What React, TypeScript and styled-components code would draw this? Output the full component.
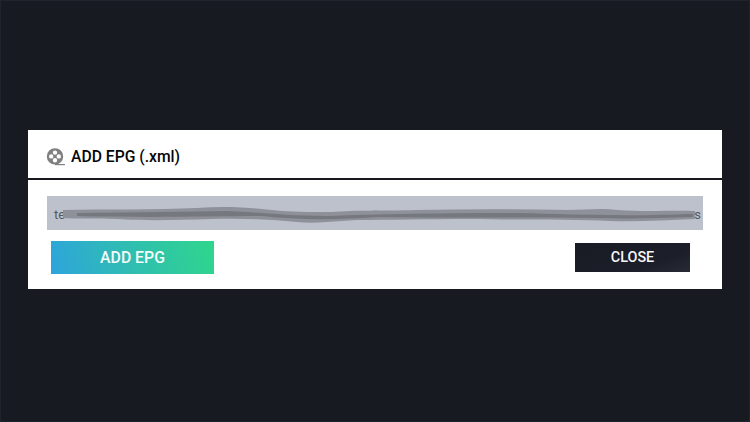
import React from "react";
import styled, { createGlobalStyle } from "styled-components";

const GlobalStyle = createGlobalStyle`
  html, body {
    margin: 0;
    padding: 0;
    height: 100%;
    background: #171a21;
  }
  #root {
    height: 100%;
  }
`;

const Page = styled.div`
  width: 750px;
  height: 422px;
  box-sizing: border-box;
  padding: 130px 28px 133px;
  background: #171a21;
  border: 1px solid #20242d;
  font-family: Roboto, "Liberation Sans", sans-serif;
  overflow: hidden;
`;

const Modal = styled.div`
  margin: -1px;
  height: 159px;
  background: #fff;
  display: flex;
  flex-direction: column;
`;

const ModalHeader = styled.div`
  height: 50px;
  box-sizing: border-box;
  padding: 5px 0 0 18px;
  display: flex;
  align-items: center;
  gap: 5px;
  border-bottom: 2px solid #16181d;
  flex-shrink: 0;
`;

const ModalTitle = styled.h4`
  margin: 0;
  font-size: 15.7px;
  font-weight: 500;
  color: #050608;
`;

const ModalBody = styled.div`
  padding: 16px 19px 0;
  display: flex;
  flex-direction: column;
`;

const UrlField = styled.div`
  position: relative;
  height: 34px;
  box-sizing: border-box;
  padding: 2px 2px 0 7px;
  background: #bcc1cc;
  display: flex;
  align-items: center;
  justify-content: space-between;
  font-size: 13px;
  color: #555961;
`;

const Scribble = styled.svg`
  position: absolute;
  left: 0;
  top: 0;
  width: 100%;
  height: 100%;
  filter: blur(0.7px);
`;

const Actions = styled.div`
  margin-top: 11px;
  padding: 0 13px 0 4px;
  display: flex;
  align-items: center;
  justify-content: space-between;
`;

const AddButton = styled.button`
  width: 163px;
  height: 33px;
  border: none;
  padding: 0;
  background: linear-gradient(75deg, #2ea4dc 0%, #2fbcb4 45%, #2fd68c 100%);
  color: #f4fcfa;
  font-family: inherit;
  font-size: 15.8px;
  font-weight: 500;
`;

const CloseButton = styled.button`
  width: 115px;
  height: 29px;
  border: none;
  padding: 0;
  background: linear-gradient(160deg, #181b24 0%, #1c1f29 70%, #272b36 100%);
  color: #f6f7f8;
  font-family: inherit;
  font-size: 14.4px;
  font-weight: 500;
`;

const ReelIcon = () => (
  <svg width="20" height="18" viewBox="0 0 20 18">
    <path d="M9 16.6h10" stroke="#808080" strokeWidth="1.2" fill="none" />
    <path
      fillRule="evenodd"
      fill="#808080"
      d="M9 0.2a8.2 8.2 0 1 1 0 16.4a8.2 8.2 0 1 1 0-16.4zM9 2.4a2.2 2.2 0 1 0 0 4.4a2.2 2.2 0 1 0 0-4.4zM9 10a2.2 2.2 0 1 0 0 4.4a2.2 2.2 0 1 0 0-4.4zM5.2 6.2a2.2 2.2 0 1 0 0 4.4a2.2 2.2 0 1 0 0-4.4zM12.8 6.2a2.2 2.2 0 1 0 0 4.4a2.2 2.2 0 1 0 0-4.4z"
    />
  </svg>
);

const RedactedLine = () => (
  <Scribble viewBox="0 0 656 34" preserveAspectRatio="none">
    <path
      fill="#8e9199"
      d="M16 14 C60 13 110 14 150 12 C175 10 200 11 225 14 C245 16 260 16 285 16 C310 14 330 15 370 14 C420 13 470 13 520 14 C540 14 555 12 570 14 C600 16 630 14 648 15 L648 23 C620 24 590 26 563 25 C530 23 480 24 423 23 C380 23 340 24 310 24 C290 25 270 28 250 26 C220 23 190 22 165 23 C130 24 100 25 70 23 C50 22 30 23 16 22 Z"
    />
    <path
      fill="#75787f"
      d="M30 17 C90 16 140 16 180 15 C210 16 240 20 280 20 C330 18 400 17 470 17 C510 18 540 19 570 19 C600 20 630 18 646 18 L646 21 C610 22 580 23 550 22 C480 21 400 22 330 21 C290 24 250 24 215 20 C170 20 110 22 30 20 Z"
    />
  </Scribble>
);

export default function App() {
  return (
    <Page>
      <GlobalStyle />
      <Modal>
        <ModalHeader>
          <ReelIcon />
          <ModalTitle>ADD EPG (.xml)</ModalTitle>
        </ModalHeader>
        <ModalBody>
          <UrlField>
            <span>te</span>
            <RedactedLine />
            <span>s</span>
          </UrlField>
          <Actions>
            <AddButton>ADD EPG</AddButton>
            <CloseButton>CLOSE</CloseButton>
          </Actions>
        </ModalBody>
      </Modal>
    </Page>
  );
}
